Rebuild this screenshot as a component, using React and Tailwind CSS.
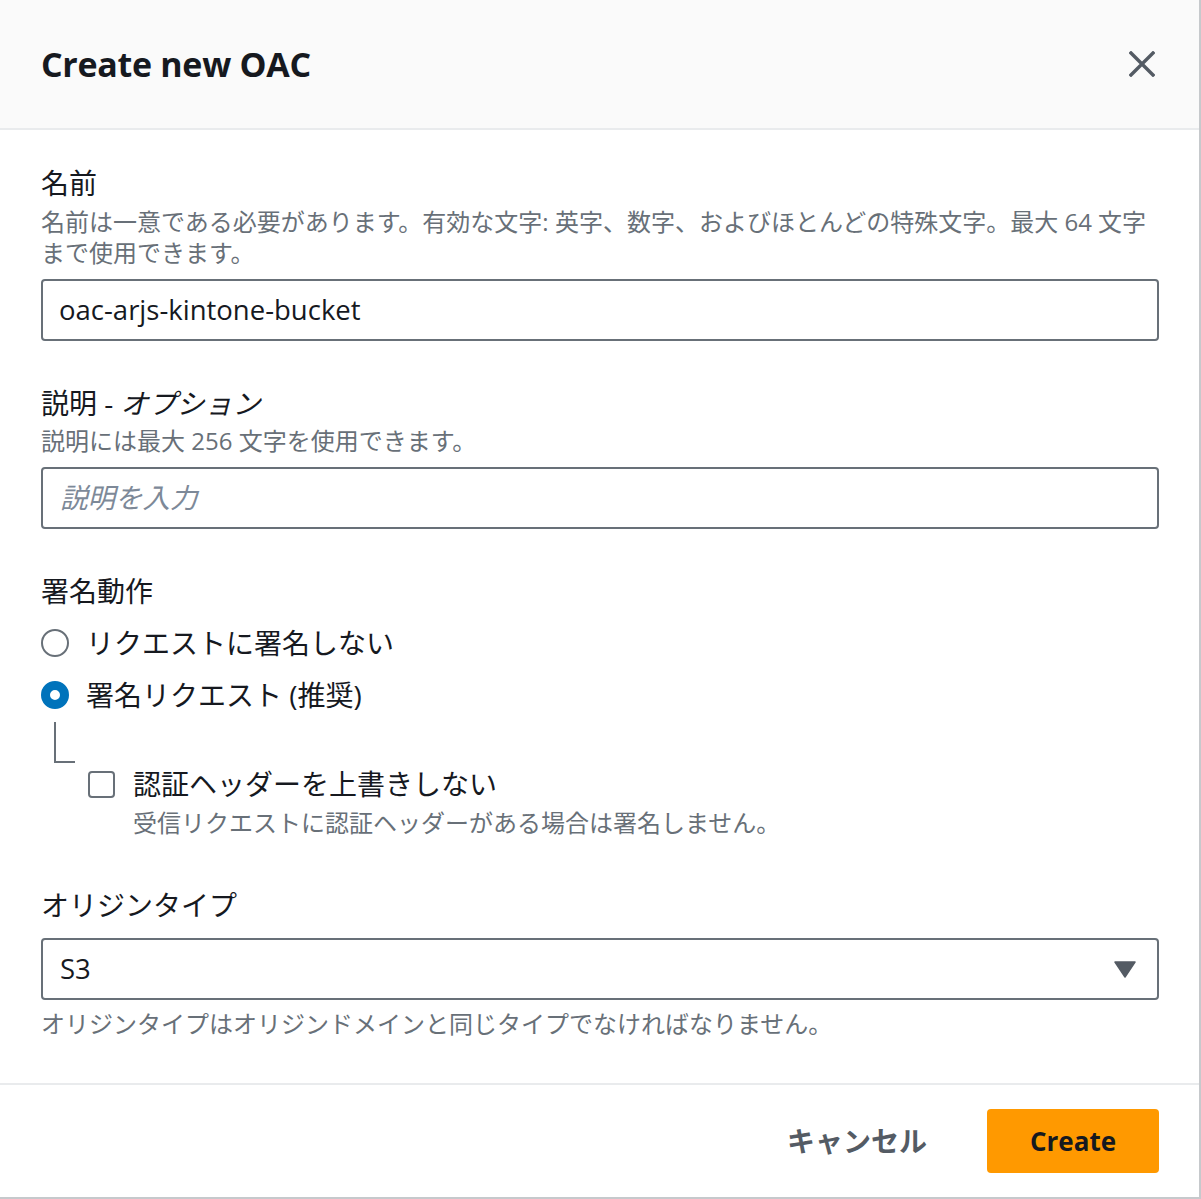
const FONT = { fontFamily: '"Open Sans", "Noto Sans CJK JP", sans-serif' };

function Label({ children }) {
  return <div className="text-[28px] leading-[36px] text-[#16191f]">{children}</div>;
}

function Hint({ children, className = '' }) {
  return <div className={`text-[24px] leading-[31px] text-[#687078] ${className}`}>{children}</div>;
}

export default function App() {
  return (
    <div style={FONT} className="w-[1201px] h-[1199px] bg-white flex flex-col border-r-2 border-b-2 border-[#c6c9cc]">
      {/* Header */}
      <div className="h-[130px] shrink-0 bg-[#fafafa] border-b-2 border-[#e9ebed] flex items-center justify-between pl-[41px] pr-[44px]">
        <h1 className="text-[34px] font-bold text-[#16191f] tracking-[-0.3px]">Create new OAC</h1>
        <svg width="26" height="26" viewBox="0 0 26 26">
          <path d="M2 2 L24 24 M24 2 L2 24" stroke="#545b64" strokeWidth="3.4" strokeLinecap="square" />
        </svg>
      </div>

      {/* Body */}
      <div className="flex-1 px-[41px] pt-[35px]">
        <Label>名前</Label>
        <Hint className="mt-[5px]">
          名前は一意である必要があります。有効な文字: 英字、数字、およびほとんどの特殊文字。最大 64 文字まで使用できます。
        </Hint>
        <div className="mt-[11px] h-[62px] w-[1118px] border-2 border-[#687078] rounded-[4px] flex items-center px-[16px] text-[27.5px] text-[#16191f]">
          oac-arjs-kintone-bucket
        </div>

        <div className="mt-[44px]">
          <Label>
            説明 - <span className="italic">オプション</span>
          </Label>
        </div>
        <Hint className="mt-[4px]">説明には最大 256 文字を使用できます。</Hint>
        <div className="mt-[11px] h-[62px] w-[1118px] border-2 border-[#687078] rounded-[4px] flex items-center px-[17px] text-[27.5px] italic text-[#7d8998]">
          説明を入力
        </div>

        <div className="mt-[44px]">
          <Label>署名動作</Label>
        </div>
        <div className="mt-[14px] flex flex-col gap-[12px]">
          <div className="flex items-center h-[40px]">
            <span className="w-[28px] h-[28px] rounded-full border-2 border-[#687078] bg-white" />
            <span className="ml-[17px] text-[28px] text-[#16191f]">リクエストに署名しない</span>
          </div>
          <div className="flex items-center h-[40px]">
            <span className="w-[28px] h-[28px] rounded-full border-[9px] border-[#0073bb] bg-white" />
            <span className="ml-[17px] text-[28px] text-[#16191f]">署名リクエスト (推奨)</span>
          </div>
        </div>

        {/* nested option */}
        <div className="flex">
          <div className="ml-[13px] mt-[7px] w-[21px] h-[41px] border-l-2 border-b-2 border-[#687078]" />
        </div>
        <div className="flex items-center ml-[47px] mt-[6px] h-[30px]">
          <span className="w-[27px] h-[27px] rounded-[4px] border-2 border-[#687078] bg-white" />
          <span className="ml-[18px] text-[28px] text-[#16191f]">認証ヘッダーを上書きしない</span>
        </div>
        <Hint className="ml-[92px] mt-[8px]">受信リクエストに認証ヘッダーがある場合は署名しません。</Hint>

        <div className="mt-[49px]">
          <Label>オリジンタイプ</Label>
        </div>
        <div className="mt-[15px] h-[62px] w-[1118px] border-2 border-[#687078] rounded-[4px] flex items-center justify-between pl-[17px] pr-[21px] text-[27.5px] text-[#16191f]">
          <span>S3</span>
          <svg width="22" height="17" viewBox="0 0 22 17">
            <path d="M1 1 H21 L11 16 Z" fill="#545b64" stroke="#545b64" strokeWidth="1.5" strokeLinejoin="round" />
          </svg>
        </div>
        <Hint className="mt-[8px]">オリジンタイプはオリジンドメインと同じタイプでなければなりません。</Hint>
      </div>

      {/* Footer */}
      <div className="h-[114px] shrink-0 border-t-2 border-[#e9ebed] flex items-center justify-end pr-[40px]">
        <button className="text-[28px] font-bold text-[#545b64] mr-[60px]">キャンセル</button>
        <button className="w-[172px] h-[64px] rounded-[4px] bg-[#ff9900] text-[26px] font-bold text-[#16191f]">Create</button>
      </div>
    </div>
  );
}
